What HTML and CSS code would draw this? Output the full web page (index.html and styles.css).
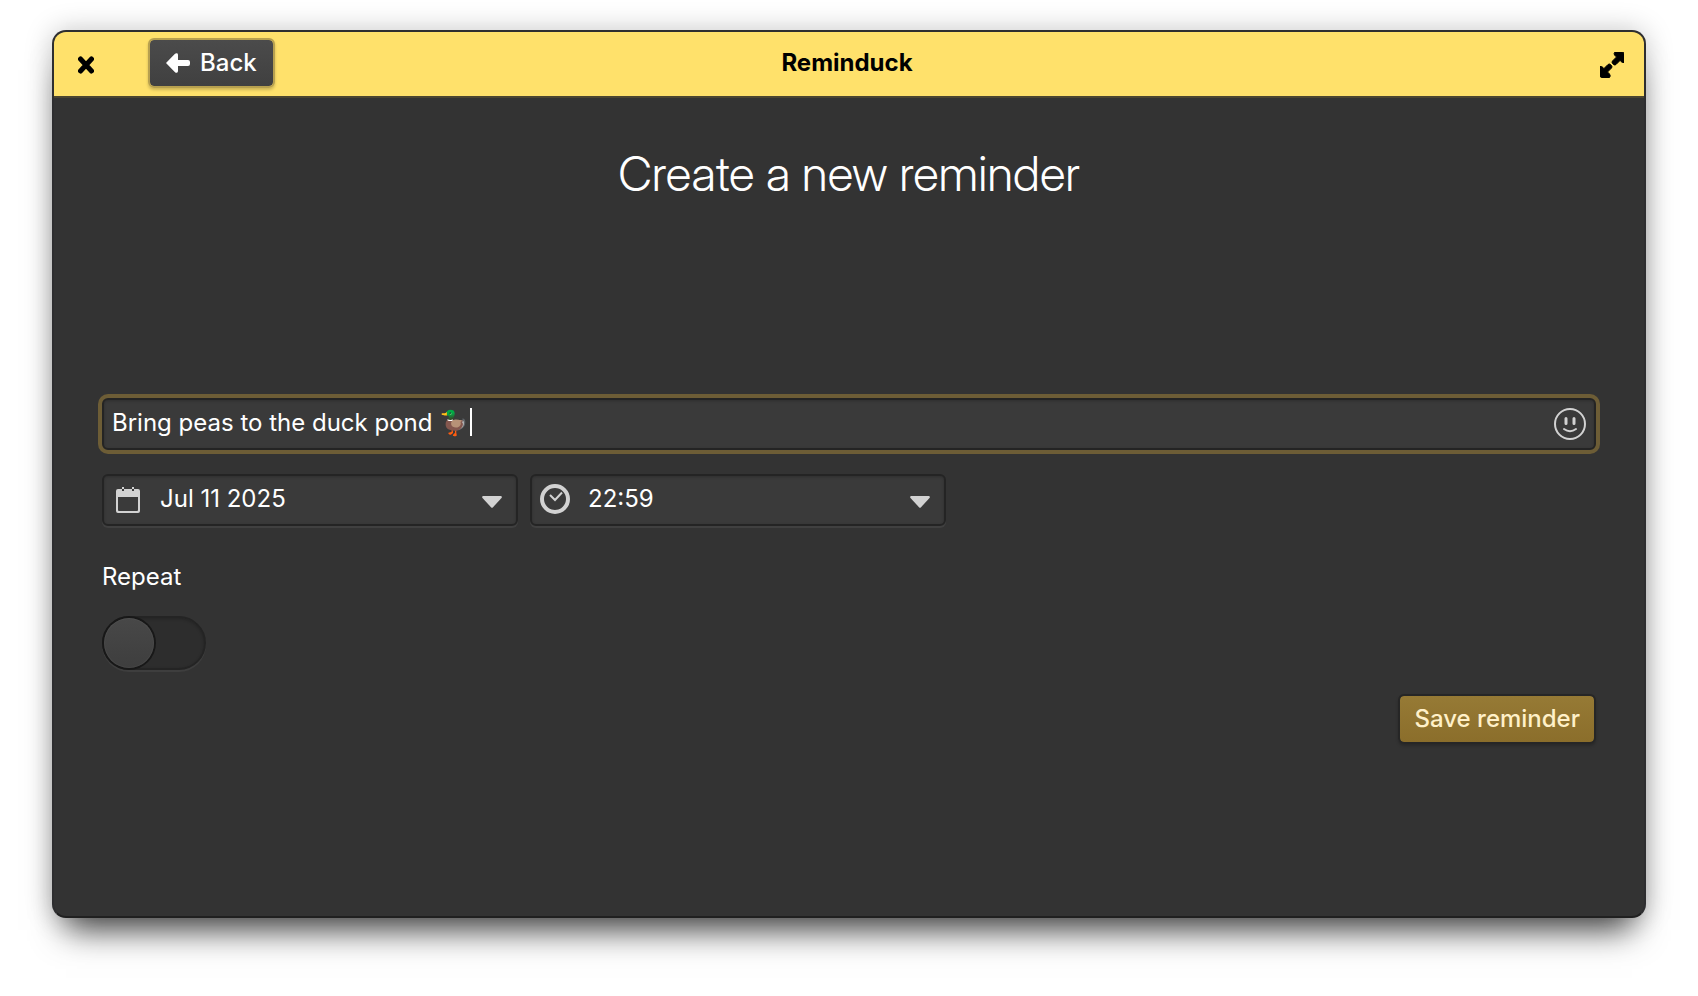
FILE: index.html
```html
<!DOCTYPE html>
<html lang="en">
<head>
<meta charset="utf-8">
<title>Reminduck</title>
<link rel="stylesheet" href="styles.css">
</head>
<body>
<div class="window">
  <header class="headerbar">
    <div class="header-start">
      <button class="icon-button" type="button" aria-label="Close">
        <svg width="16" height="18" viewBox="0 0 16 18" aria-hidden="true"><path d="M2.500 3L13.500 15M13.500 3L2.500 15" stroke="#000" stroke-width="5" stroke-linecap="round"/></svg>
      </button>
      <button class="button back" type="button">
        <svg width="24" height="20" viewBox="0 0 24 20" aria-hidden="true"><path d="M0 10L9 .8Q10 0 11 .3Q12 .6 12 2V7H22Q24 7 24 9V11Q24 13 22 13H12V18Q12 19.400 11 19.700Q10 20 9 19.200Z" fill="#fff"/></svg>
        Back
      </button>
    </div>
    <h1 class="title">Reminduck</h1>
    <div class="header-end">
      <button class="icon-button" type="button" aria-label="Maximize">
        <svg width="24" height="26" viewBox="0 0 24 26" aria-hidden="true"><path d="M15 0H22Q24 0 24 2V10.500Q22.500 11 21 9.500L20 8.500L16 12.500Q15 13.500 13.500 12.500L12.500 11.500Q11.500 10 12.500 9L16.500 5L14.500 3Q13.500 1.500 15 0ZM0 14.500Q1.500 14 3 15.500L4 16.500L8 12.500Q9.500 11.500 10.500 12.500L11.500 13.500Q12.500 15 11.500 16L7.500 20L9.500 22Q11 24 9.500 25.500H2Q0 25.500 0 23.500Z" fill="#000" stroke="#000"/></svg>
      </button>
    </div>
  </header>
  <main class="content">
    <h2 class="heading">Create a new reminder</h2>
    <form class="form">
      <div class="entry focused">
        <input class="entry-text" type="text" aria-label="Reminder" value="Bring peas to the duck pond 🦆">
        <span class="caret"></span>
        <button class="entry-icon" type="button" aria-label="Insert emoji">
          <svg width="32" height="32" viewBox="0 0 32 32" fill="none" stroke="#d2d2d2" stroke-width="2" stroke-linecap="round" aria-hidden="true"><circle cx="16" cy="16" r="15"/><path d="M12 10.500v5M20 10.500v5" stroke-width="3"/><path d="M10 21Q16 25.500 22 21"/></svg>
        </button>
      </div>
      <div class="pickers">
        <div class="entry">
          <svg class="lead date-icon" width="24" height="26" viewBox="0 0 24 26" aria-hidden="true"><path fill="#d2d2d2" fill-rule="evenodd" d="M2 2H6V4H8V2H16V4H18V2H22Q24 2 24 4V24Q24 26 22 26H2Q0 26 0 24V4Q0 2 2 2ZM2 10V23Q2 24 3 24H21Q22 24 22 23V10Z"/><path fill="#d2d2d2" d="M6 0h2v2h-2zM16 0h2v2h-2z"/></svg>
          <input class="entry-text" type="text" aria-label="Date" value="Jul 11 2025">
          <button class="entry-icon arrow" type="button" aria-label="Choose date"><svg width="20" height="12" viewBox="0 0 20 12" aria-hidden="true"><path fill="#d2d2d2" d="M1 0H19Q20.500 .5 19.500 2L11 11.200Q10 12.200 9 11.200L.5 2Q-.5 .5 1 0Z"/></svg></button>
        </div>
        <div class="entry">
          <svg class="lead" width="30" height="30" viewBox="0 0 30 30" fill="none" stroke="#d2d2d2" aria-hidden="true"><circle cx="15" cy="15" r="13" stroke-width="4"/><path d="M10 11L15 16L22 8.500" stroke-width="2"/></svg>
          <input class="entry-text" type="text" aria-label="Time" value="22:59">
          <button class="entry-icon arrow" type="button" aria-label="Choose time"><svg width="20" height="12" viewBox="0 0 20 12" aria-hidden="true"><path fill="#d2d2d2" d="M1 0H19Q20.500 .5 19.500 2L11 11.200Q10 12.200 9 11.200L.5 2Q-.5 .5 1 0Z"/></svg></button>
        </div>
      </div>
      <label class="repeat-label" for="repeat">Repeat</label>
      <input class="switch" id="repeat" type="checkbox" role="switch">
      <button class="button suggested" type="button">Save reminder</button>
    </form>
  </main>
</div>
</body>
</html>
```
FILE: styles.css
```css
* {
  box-sizing: border-box;
}

body {
  display: flex;
  min-height: 100vh;
  margin: 0;
  padding: 30px 52px 78px;
  background: #fff;
  color: #fff;
  font: 24px/32px Inter, "Noto Color Emoji", sans-serif;
}

button,
input {
  margin: 0;
  padding: 0;
  border: 0;
  background: none;
  color: inherit;
  font: inherit;
}

svg {
  display: block;
}

.window {
  display: flex;
  flex: 1;
  flex-direction: column;
  overflow: hidden;
  border: 2px solid #2e2e30;
  border-bottom-color: #202020;
  border-radius: 14px;
  background: #333;
  box-shadow: 0 0 28px rgba(0, 0, 0, 0.22), 0 26px 32px -14px rgba(0, 0, 0, 0.7);
}

.headerbar {
  display: grid;
  grid-template-columns: 1fr auto 1fr;
  align-items: start;
  height: 66px;
  padding: 6px 20px 0 24px;
  border-bottom: 2px solid #4b4530;
  background: #ffe16b;
  color: #000;
}

.header-start,
.header-end {
  display: flex;
}

.header-start {
  gap: 54px;
}

.header-end {
  justify-content: flex-end;
}

.icon-button {
  display: flex;
  align-items: center;
  height: 54px;
}

.title {
  margin: 0;
  padding: 9px 8px 0 0;
  font-size: 24px;
  font-weight: 700;
}

.button {
  display: flex;
  align-items: center;
  height: 50px;
  border: 2px solid;
  border-radius: 6px;
  font-weight: 500;
}

.back {
  gap: 10px;
  padding: 0 16px;
  border-color: #b7a04f;
  background: linear-gradient(#4b4b4b, #404040) padding-box;
  box-shadow: 0 2px 3px rgba(0, 0, 0, 0.2);
  color: #fff;
}

.content {
  display: flex;
  flex: 1;
  flex-direction: column;
  padding: 44px 48px;
}

.heading {
  margin: 0 0 192px;
  font-family: "Inter Display", Inter, sans-serif;
  font-size: 48px;
  font-variation-settings: "opsz" 32;
  font-weight: 300;
  line-height: 64px;
  text-align: center;
}

.form {
  display: flex;
  flex-direction: column;
}

.entry {
  position: relative;
  display: flex;
  align-items: center;
  height: 52px;
  padding: 0 8px;
  border: 2px solid #242424;
  border-radius: 6px;
  background: #3a3a3a;
  box-shadow: inset 0 1px 3px rgba(0, 0, 0, 0.2), 0 2px 0 #404040;
}

.focused {
  box-shadow: inset 0 1px 3px rgba(0, 0, 0, 0.2), 0 0 0 4px #6d5d36;
}

.entry-text {
  flex: 1;
  min-width: 0;
  height: 36px;
  padding-bottom: 4px;
  outline: 0;
}

.caret {
  position: absolute;
  top: 8px;
  left: 366px;
  width: 2px;
  height: 28px;
  background: #fff;
}

.pickers {
  display: grid;
  grid-template-columns: 416px 416px;
  gap: 12px;
  margin: 24px 0 35px;
}

.lead {
  margin-right: 18px;
  margin-bottom: 2px;
}

.date-icon {
  margin: 0 20px 0 4px;
}

.arrow {
  margin: 4px 6px 0;
}

.repeat-label {
  align-self: flex-start;
  margin-bottom: 23px;
}

.switch {
  width: 104px;
  height: 54px;
  border: 2px solid #242424;
  border-radius: 27px;
  appearance: none;
  background: #2d2d2d;
  box-shadow: inset 0 1px 3px rgba(0, 0, 0, 0.2), 0 2px 0 #3e3e3e;
}

.switch::before {
  display: block;
  width: 50px;
  height: 50px;
  border-radius: 50%;
  background: linear-gradient(#484848, #3e3e3e);
  box-shadow: inset 0 0 0 1px rgba(255, 255, 255, 0.04), 0 0 0 2px #181818;
  content: "";
}

.switch:checked::before {
  margin-left: 50px;
}

.suggested {
  align-self: flex-end;
  margin-top: 24px;
  padding: 0 14px;
  border-color: #262626;
  background: linear-gradient(#967a35, #8b6e2b) padding-box;
  box-shadow: 0 2px 3px rgba(0, 0, 0, 0.2);
  color: #fff0c8;
}
```
